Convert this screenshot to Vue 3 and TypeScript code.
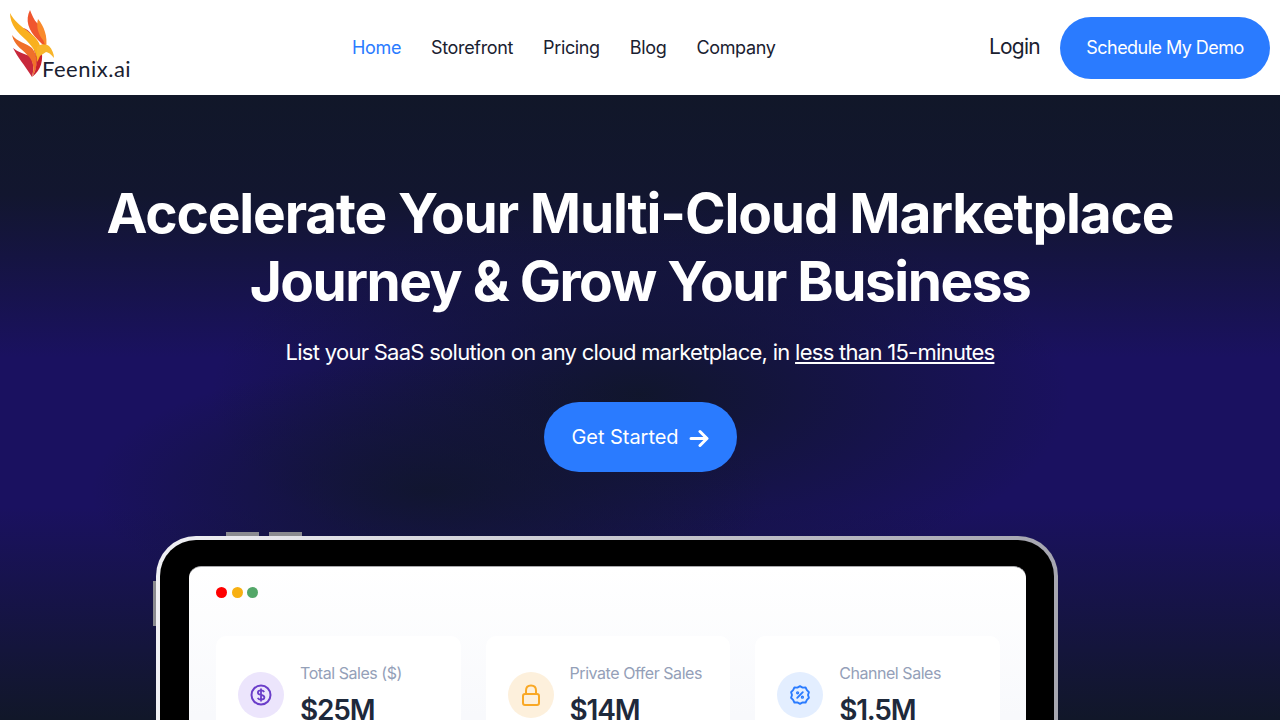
<script setup lang="ts">
interface NavLink {
  label: string
  active?: boolean
}

interface Stat {
  label: string
  value: string
  kind: 'sales' | 'offer' | 'channel'
}

const links: NavLink[] = [
  { label: 'Home', active: true },
  { label: 'Storefront' },
  { label: 'Pricing' },
  { label: 'Blog' },
  { label: 'Company' }
]

const stats: Stat[] = [
  { label: 'Total Sales ($)', value: '$25M', kind: 'sales' },
  { label: 'Private Offer Sales', value: '$14M', kind: 'offer' },
  { label: 'Channel Sales', value: '$1.5M', kind: 'channel' }
]
</script>

<template>
  <div class="page">
    <header class="topbar">
      <a class="logo">
        <svg class="logo-mark" width="50" height="70" viewBox="0 0 50 70">
          <path d="M20 0C15 10 18 20 28 30L36 38C37 26 33 16 27 13C24 10 22 5 20 0Z" fill="#f0562e" />
          <path d="M28 9C26 16 28 24 33 30L36 37C38 27 34 16 28 9Z" fill="#f98a2c" />
          <path d="M13 18C19 19 25 27 29 40L25 38C20 32 15 26 13 18Z" fill="#cf2f48" />
          <path d="M3 38C8 48 14 54 22 67C24 60 24 52 20 46C14 44 8 42 3 38Z" fill="#c8283c" />
          <path d="M2 25C4 36 14 40 20 48C24 54 24 60 22 67C29 56 28 46 22 38C16 33 7 32 2 25Z" fill="#f0702a" />
          <path d="M24 40C28 50 27 60 22 67C31 60 34 50 31 38Z" fill="#c9202c" />
          <path d="M0 3C0 15 8 23 16 30C24 38 27 44 27 52C31 46 32 40 29 33C24 22 8 18 0 3Z" fill="#f9b01e" />
          <path d="M27 37C31 33 36 34 39 36C42 39 44 44 44 48C41 44 38 42 36 42C33 44 30 46 27 48Z" fill="#f8b52a" />
        </svg>
        <span class="logo-text">Feenix.ai</span>
      </a>

      <nav class="nav">
        <a v-for="link in links" :key="link.label" :class="{ active: link.active }">{{ link.label }}</a>
      </nav>

      <div class="actions">
        <a class="login">Login</a>
        <button class="demo">Schedule My Demo</button>
      </div>
    </header>

    <section class="hero">
      <h1><span class="wide">Accelerate Your Multi-Cloud Marketplace</span><br />Journey &amp; Grow Your Business</h1>
      <p class="sub">List your SaaS solution on any cloud marketplace, in <u>less than 15-minutes</u></p>
      <button class="start">
        Get Started
        <svg width="20" height="18" viewBox="0 0 20 18" fill="none" stroke="#fff" stroke-width="3" stroke-linecap="round" stroke-linejoin="round">
          <path d="M2 9.5H17M11 2.5L18 9.5L11 16.5" />
        </svg>
      </button>

      <div class="laptop">
        <span class="side-btn top one"></span>
        <span class="side-btn top two"></span>
        <span class="side-btn left"></span>
        <div class="screen">
          <div class="dots">
            <span class="red"></span>
            <span class="yellow"></span>
            <span class="green"></span>
          </div>
          <div class="cards">
            <div v-for="stat in stats" :key="stat.label" class="card">
              <div class="circle" :class="stat.kind">
                <svg v-if="stat.kind === 'sales'" width="22" height="22" viewBox="0 0 22 22" fill="none" stroke="#6a3dc9" stroke-width="2">
                  <circle cx="11" cy="11" r="9.5" />
                  <path d="M14.2 8C13.6 6.9 12.4 6.4 11 6.4C9.3 6.4 7.9 7.2 7.9 8.7C7.9 11.8 14.4 10.1 14.4 13.3C14.4 14.8 12.9 15.6 11 15.6C9.5 15.6 8.3 15 7.7 13.9M11 4.6V17.4" stroke-width="1.8" />
                </svg>
                <svg v-else-if="stat.kind === 'offer'" width="20" height="22" viewBox="0 0 20 22" fill="none" stroke="#f9a825" stroke-width="2">
                  <rect x="2" y="10" width="16" height="11" rx="2" />
                  <path d="M5 10V6.5C5 3.5 7 1.5 10 1.5C13 1.5 15 3.5 15 6.5V10" />
                </svg>
                <svg v-else width="20" height="20" viewBox="0 0 20 20" fill="none" stroke="#2a7bff" stroke-width="1.9" stroke-linecap="round">
                  <path d="M10 1.2L12.6 2.6L15.6 2.5L16.9 5.1L18.9 7.2L18 10L18.9 12.8L16.9 14.9L15.6 17.5L12.6 17.4L10 18.8L7.4 17.4L4.4 17.5L3.1 14.9L1.1 12.8L2 10L1.1 7.2L3.1 5.1L4.4 2.5L7.4 2.6Z" stroke-linejoin="round" />
                  <path d="M7.2 12.8L12.8 7.2" />
                  <circle cx="7.6" cy="7.8" r=".7" />
                  <circle cx="12.4" cy="12.2" r=".7" />
                </svg>
              </div>
              <div class="figures">
                <div class="label">{{ stat.label }}</div>
                <div class="value">{{ stat.value }}</div>
              </div>
            </div>
          </div>
        </div>
      </div>
    </section>
  </div>
</template>

<style>
html,
body {
  margin: 0;
  overflow: hidden;
}
</style>

<style scoped>
.page {
  width: 1280px;
  height: 720px;
  overflow: hidden;
  font-family: Inter, "Liberation Sans", sans-serif;
}

.topbar {
  height: 95px;
  box-sizing: border-box;
  background: #fff;
  display: flex;
  align-items: center;
  padding: 0 10px;
}

.logo {
  width: 121px;
  height: 70px;
  margin-top: -5px;
  display: flex;
  align-items: flex-end;
  color: #1a2130;
}

.logo-mark {
  flex: none;
  margin-right: -18px;
}

.logo-text {
  font-size: 22px;
  line-height: 22px;
  font-family: Lato, sans-serif;
  letter-spacing: 0.5px;
}

.nav {
  display: flex;
  gap: 30px;
  margin-left: 221px;
  font-size: 18px;
  letter-spacing: -0.35px;
  color: #1a2130;
}

.nav .active {
  color: #2a7bff;
}

.actions {
  margin-left: auto;
  display: flex;
  align-items: center;
  gap: 20px;
}

.login {
  font-size: 21px;
  letter-spacing: -0.75px;
  color: #1a2130;
  margin-top: -3px;
}

.demo {
  width: 210px;
  height: 62px;
  border: none;
  border-radius: 31px;
  background: #2a7bff;
  color: #fff;
  font: inherit;
  font-size: 18px;
  letter-spacing: -0.55px;
}

.hero {
  height: 625px;
  box-sizing: border-box;
  padding-top: 84px;
  display: flex;
  flex-direction: column;
  align-items: center;
  overflow: hidden;
  background:
    radial-gradient(ellipse 340px 130px at 430px 395px, rgba(16, 22, 42, 0.85), rgba(16, 22, 42, 0)),
    radial-gradient(ellipse 430px 190px at 640px 300px, rgba(16, 22, 42, 0.95), rgba(16, 22, 42, 0)),
    linear-gradient(180deg, #111729 0%, #12162f 16%, #1a1160 42%, #1a1160 66%, #111729 100%);
}

h1 {
  margin: 0;
  color: #fff;
  font-size: 55px;
  line-height: 68px;
  font-weight: 700;
  letter-spacing: -1.5px;
  text-align: center;
}

h1 .wide {
  letter-spacing: -1.14px;
}

.sub {
  margin: 22px 0 0;
  color: #fff;
  font-size: 22px;
  line-height: 30px;
  letter-spacing: -0.72px;
}

.start {
  flex: none;
  width: 193px;
  height: 70px;
  margin-top: 35px;
  padding-bottom: 2px;
  border: none;
  border-radius: 35px;
  background: #2a7bff;
  color: #fff;
  font: inherit;
  font-size: 20px;
  letter-spacing: -0.05px;
  display: flex;
  align-items: center;
  justify-content: center;
  gap: 10px;
}

.start svg {
  margin-top: 2px;
}

.laptop {
  position: relative;
  flex: none;
  width: 902px;
  height: 400px;
  box-sizing: border-box;
  margin-top: 64px;
  margin-left: -66px;
  padding: 26px 28px 0 29px;
  border: 4px solid transparent;
  border-bottom: none;
  border-radius: 40px 40px 0 0;
  background:
    linear-gradient(#000, #000) padding-box,
    linear-gradient(90deg, #f0f0f4 0%, #c8c8d0 50%, #a6a6b0 100%) border-box;
}

.side-btn {
  position: absolute;
  background: #8b8b90;
}

.side-btn.top {
  top: -8px;
  width: 33px;
  height: 4px;
}

.side-btn.one {
  left: 66px;
}

.side-btn.two {
  left: 109px;
}

.side-btn.left {
  left: -7px;
  top: 41px;
  width: 3px;
  height: 45px;
}

.screen {
  height: 374px;
  box-sizing: border-box;
  padding: 20px 25px 0 27px;
  border-top: 1px solid #a8a8ac;
  border-radius: 12px 12px 0 0;
  background: linear-gradient(180deg, #fff 0%, #f8f9fc 40%, #f7f8fa 100%);
}

.dots {
  display: flex;
  gap: 4.7px;
}

.dots span {
  width: 11px;
  height: 11px;
  border-radius: 50%;
}

.dots .red {
  background: #fe0000;
}

.dots .yellow {
  background: #f7b012;
}

.dots .green {
  background: #53a768;
}

.cards {
  margin-top: 38px;
  display: grid;
  grid-template-columns: 244.6px 244.6px 244.6px;
  gap: 25px;
}

.card {
  height: 200px;
  box-sizing: border-box;
  padding: 36px 22px 0;
  background: #fff;
  border-radius: 10px;
  display: flex;
  gap: 16px;
}

.circle {
  flex: none;
  width: 46px;
  height: 46px;
  border-radius: 50%;
  display: flex;
  align-items: center;
  justify-content: center;
}

.circle.sales {
  background: #ece5fc;
}

.circle.offer {
  background: #fdf0dc;
}

.circle.channel {
  background: #e3eeff;
}

.label {
  margin-top: -10px;
  font-size: 16px;
  line-height: 22px;
  letter-spacing: -0.45px;
  color: #94a0b8;
}

.value {
  margin-top: 9px;
  font-size: 28px;
  line-height: 34px;
  font-weight: 600;
  letter-spacing: -1.2px;
  color: #1e293b;
}
</style>
